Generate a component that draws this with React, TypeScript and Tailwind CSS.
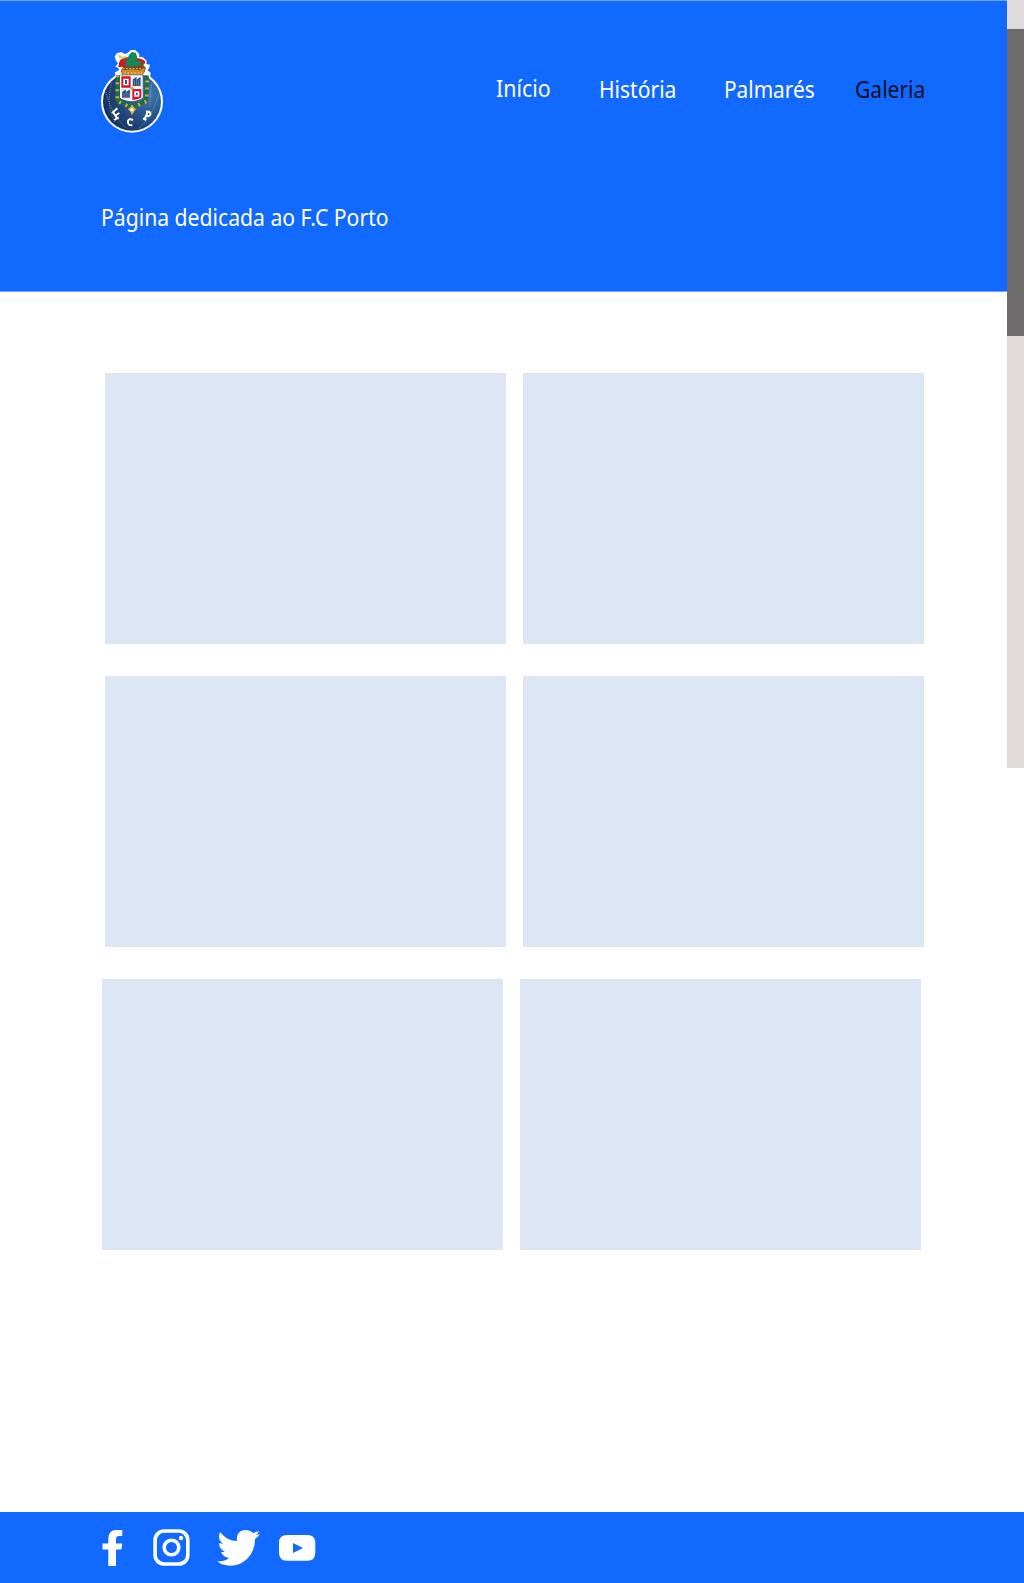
import React from "react";

function Crest() {
  return (
    <svg width="64" height="84" viewBox="30 30 192 252" aria-label="F.C. Porto">
      <defs>
        <radialGradient id="ball" cx="0.78" cy="0.36" r="0.8">
          <stop offset="0" stopColor="#4279b4" />
          <stop offset="0.45" stopColor="#28568f" />
          <stop offset="1" stopColor="#15305e" />
        </radialGradient>
      </defs>
      <circle cx="126" cy="185" r="93" fill="#fff" />
      <path d="M76 112L75 97L88 90L84 83L76 80L84 70L78 62L74 50L80 40L94 36L105 42L114 38L122 30L136 30L148 42L147 50L158 51L170 62L169 72L180 74L177 86L172 90L182 98L180 114Z" fill="#fff" />
      <circle cx="126" cy="185" r="87" fill="url(#ball)" />
      <g fill="none" stroke="#b4c6dc" strokeWidth="2" strokeDasharray="3 4">
        <path d="M66 128Q46 190 74 246M186 128Q180 160 180 200M48 156Q62 218 108 264M206 160Q190 226 145 266" />
      </g>
      <path d="M84 106L83 180L101 190L126 202L151 190L168 180L170 106" fill="none" stroke="#1c7041" strokeWidth="13" />
      <path d="M82 106L82 184L101 192L126 204L151 192L170 184L172 106" fill="none" stroke="#d3a345" strokeWidth="11" strokeDasharray="6 15" />
      <path d="M92 94L99 80L88 80L86 68L98 54L122 50L152 56L166 64L160 76L168 84L164 96L156 104H98Z" fill="#7e4b20" />
      <path d="M84 80L92 58L104 62L112 70L100 80ZM146 57L162 60L166 70L156 74L142 68Z" fill="#cf1826" />
      <path d="M110 62L117 45L125 36L137 38L142 52L134 60L156 67L152 76L120 80L106 76Z" fill="#16875a" />
      <path d="M85 43L98 50L112 47L101 56L86 53Z" fill="#e2c688" />
      <path d="M92 86L105 91L126 88L148 91L166 84L160 104H99Z" fill="#d08b2c" />
      <path d="M98 86H160M103 99H156" stroke="#f4cf62" strokeWidth="3" strokeDasharray="5 5" />
      <path d="M90 106H158V172Q155 180 126 184Q93 181 90 172Z" fill="#fff" />
      <path d="M94 109H122V143H94ZM127 147H154V171Q151 177 127 180Z" fill="#d31629" />
      <path d="M127 110H154V142H127ZM94 148H122V179Q96 176 94 170Z" fill="#dce7f2" />
      <path d="M100 116H116V136H100ZM133 154H148V170H133Z" fill="#fff" />
      <path d="M105 120H111V132H105ZM138 158H143V166H138Z" fill="#245996" />
      <path d="M131 138V120L137 116V138M143 138V120L149 116V138M99 173V157L105 153V173M111 173V157L117 153V173" fill="none" stroke="#244d83" strokeWidth="5" />
      <path d="M130 134H150M98 169H118" stroke="#c02b35" strokeWidth="2" />
      <circle cx="126" cy="145" r="5" fill="#d89b38" />
      <path d="M126 193L131 202L139 208L133 214L126 226L120 214L113 208L121 202Z" fill="#e3ab43" />
      <circle cx="126" cy="209" r="5" fill="#fff" />
      <g fill="none" stroke="#fff" strokeWidth="6">
        <path d="M68 214L82 236M66 219L82 205M74 228L88 219M73 240L86 232" />
        <path d="M129 240Q117 234 114 243Q112 257 127 256" />
        <path d="M164 237L174 214M168 215Q184 213 181 224Q178 231 168 227M159 235L169 240" />
      </g>
    </svg>
  );
}

const textBase =
  "block origin-left whitespace-nowrap font-['Noto_Sans',sans-serif] text-[23px] leading-8 ";

function Tile() {
  return <div className="h-[271px] w-[401px] bg-[#dce6f4]" />;
}

export default function App() {
  return (
    <div className="relative flex h-[1583px] w-[1024px] flex-col overflow-hidden bg-white">
      <header className="h-[292px] w-[1007px] border-y border-[#70a5ff] bg-[#1169ff]">
        <div className="mt-[49px] flex h-[84px] pl-[100px]">
          <Crest />
          <nav className="flex pt-[22px] text-white">
            <a className="ml-[332px] w-[103px]"><span className={textBase + "scale-x-[0.93]"}>Início</span></a>
            <a className="w-[125px] pt-px"><span className={textBase + "scale-x-[0.915]"}>História</span></a>
            <a className="w-[131px] pt-px"><span className={textBase + "scale-x-[0.905]"}>Palmarés</span></a>
            <a className="w-[80px] pt-px text-[#07101f]"><span className={textBase + "scale-x-[0.915]"}>Galeria</span></a>
          </nav>
        </div>
        <h1 className="mt-[67px] pl-[101px] text-white">
          <span className={textBase + "scale-x-[0.92]"}>Página dedicada ao F.C Porto</span>
        </h1>
      </header>

      <main className="flex flex-1 flex-col gap-8 pt-[81px]">
        <div className="flex gap-[17px] pl-[105px]"><Tile /><Tile /></div>
        <div className="flex gap-[17px] pl-[105px]"><Tile /><Tile /></div>
        <div className="flex gap-[17px] pl-[102px]"><Tile /><Tile /></div>
      </main>

      <footer className="flex h-[71px] shrink-0 bg-[#1169ff] pl-[102px] pt-[17px] text-white">
        <svg width="21" height="38" viewBox="0 0 21 38" fill="currentColor">
          <path d="M6.3 37V20.5H.5V14.5H6.3V10Q6.3 1 14.5 1H20.3V7H17Q14 7 14 10V14.5H20.3L19.3 20.5H14V37Z" />
        </svg>
        <svg className="ml-[30px]" width="37" height="38" viewBox="0 0 37 38" fill="none" stroke="currentColor" strokeWidth="3.6">
          <rect x="2.1" y="2" width="32.7" height="33" rx="9" />
          <circle cx="18.5" cy="18.5" r="7.3" />
          <circle cx="28" cy="9" r="2.2" fill="currentColor" stroke="none" />
        </svg>
        <svg className="ml-[26px]" width="44" height="38" viewBox="0 0 44 38" fill="currentColor">
          <path d="M4 3Q11 12 21 12Q20 5 25 2Q32-1 37 4Q40 3 43 2Q42 5 40 6Q42 6 44 5Q42 8 39 10Q39 22 31 30Q21 39 9 36Q4 35 1 32Q8 33 13 29Q7 28 5 23H9Q3 20 3 14L7 15Q1 10 4 3Z" />
        </svg>
        <svg className="ml-[19px]" width="37" height="38" viewBox="0 0 37 38" fill="currentColor">
          <path fillRule="evenodd" d="M8 6H28.5Q36.3 6 36.3 14V23.7Q36.3 31.7 28.5 31.7H8Q0 31.7 0 23.7V14Q0 6 8 6ZM14 14V24L24 19Z" />
        </svg>
      </footer>

      <div className="absolute right-0 top-0 h-[768px] w-[17px] bg-[#dfdbdb] pt-[29px]">
        <div className="h-[307px] bg-[#6d6b6b]" />
      </div>
    </div>
  );
}
